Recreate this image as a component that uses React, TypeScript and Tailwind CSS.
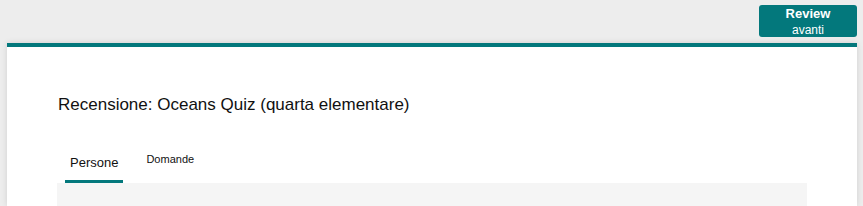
import React from 'react';

const tabs = [
    { label: 'Persone', active: true },
    { label: 'Domande', active: false },
];

export default function App() {
    return (
        <div
            className="w-full h-[206px] bg-[#ededed] flex flex-col overflow-hidden"
            style={{ fontFamily: '"Liberation Sans", Arial, sans-serif' }}
        >
            {/* top bar */}
            <div className="h-[43px] shrink-0 flex justify-end items-start pt-[5px] pr-[6px]">
                <button className="w-[98px] h-[32px] rounded-[3px] bg-[#03787c] text-white flex flex-col items-center justify-center leading-none">
                    <span className="text-[13px] font-bold">Review</span>
                    <span className="text-[12px] mt-[4px]">avanti</span>
                </button>
            </div>

            {/* card */}
            <div className="flex-1 ml-[7px] mr-[6px] bg-white border-t-[4px] border-[#03787c] shadow-[0_0_6px_rgba(0,0,0,0.12)] px-[50px] flex flex-col">
                <h1 className="mt-[48px] ml-px text-[17px] leading-[20px] text-[#111]">
                    Recensione: Oceans Quiz (quarta elementare)
                </h1>
                <div className="h-[68px] shrink-0 flex items-end ml-[8px] gap-[23px]">
                    {tabs.map((tab) => (
                        <div
                            key={tab.label}
                            className={
                                tab.active
                                    ? 'px-[5px] pb-[10px] border-b-[3px] border-[#03787c] text-[13px] leading-[15px] text-[#111]'
                                    : 'pb-[17px] text-[11px] leading-[13px] text-[#111]'
                            }
                        >
                            {tab.label}
                        </div>
                    ))}
                </div>
                <div className="flex-1 bg-[#f5f5f5]" />
            </div>
        </div>
    );
}
